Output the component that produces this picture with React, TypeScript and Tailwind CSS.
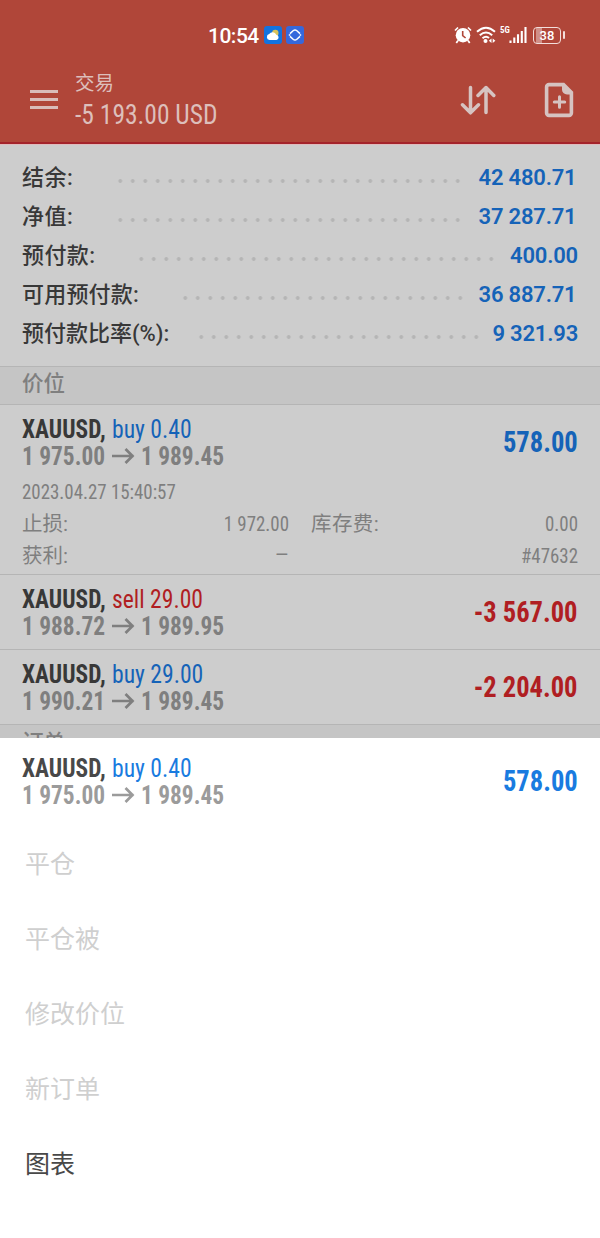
import React from "react";

const COND = "font-['Roboto_Condensed','Roboto','Noto_Sans_CJK_SC',sans-serif] [font-stretch:75%]";

function StatusBar() {
  return (
    <div className="flex h-[70px] items-center pl-[208px] text-white">
      <span className="w-[51px] whitespace-nowrap pt-px text-[21px] leading-6 font-medium tracking-[-0.5px]">10:54</span>
      <svg className="ml-[5px] h-[18px] w-[18px]" viewBox="0 0 18 18">
        <rect width="18" height="18" rx="3" fill="#1273e0" />
        <circle cx="11.3" cy="7" r="3.2" fill="#d9c45c" />
        <path d="M5.5 14a3 3 0 0 1-.3-5.9 4 4 0 0 1 7.1.6A2.7 2.7 0 0 1 12.500 14Z" fill="#fff" />
      </svg>
      <svg className="ml-[4px] h-[18px] w-[18px]" viewBox="0 0 18 18">
        <rect width="18" height="18" rx="3" fill="#3568dc" />
        <path d="M4 7.600 7.400 4.500Q9 3.300 10.600 4.500L14 7.600M4 10.400l3.400 3.100q1.600 1.200 3.200 0L14 10.400" fill="none" stroke="#fff" strokeWidth="1.500" />
        <path d="M2.800 9h1.500M13.700 9h1.500" stroke="#fff" strokeWidth="1.300" />
      </svg>
      <svg className="ml-[150px] h-[18px] w-[18px]" viewBox="0 0 18 18">
        <circle cx="9" cy="9.200" r="7.300" fill="#fff" />
        <path d="M1 4.500 4 1.500M17 4.500 14 1.500M4 14.500 2.300 17M14 14.500 15.700 17" stroke="#fff" strokeWidth="1.700" />
        <path d="M8.700 5v4.600l2.900 2.400" fill="none" stroke="#b04639" strokeWidth="1.600" />
      </svg>
      <svg className="ml-[4px] h-[18px] w-[20px]" viewBox="0 0 20 18">
        <path d="M1 5.800Q10-2.200 19 5.800M3.800 9.200Q10 3.800 16.200 9.200M6.500 12.300Q10 9.300 13 12" fill="none" stroke="#fff" strokeWidth="2" />
        <circle cx="9.500" cy="15" r="2" fill="#fff" />
        <path d="m15.500 12.500v4.500l-2.700-2.250zM16.700 12.500v4.500l2.700-2.250z" fill="#fff" />
      </svg>
      <span className={`ml-[4px] -mt-[9px] w-[9px] text-[9px] leading-[9px] font-bold ${COND}`}>5G</span>
      <svg className="h-[18px] w-[18px]" viewBox="0 0 18 18">
        <path d="M1.500 14.500v2.500M5.300 11.500V17M9 8.300V17M12.800 5V17M16.500 1V17" stroke="#fff" strokeWidth="2.100" />
      </svg>
      <span className="ml-[6px] flex h-[17px] w-[28px] items-center justify-center rounded-[4px] border-[1.5px] border-[#f3dedb] bg-[linear-gradient(90deg,transparent_2px,#d08f87_2px,#d08f87_8px,transparent_8px)] text-[13px] leading-none font-medium">38</span>
      <span className="ml-[1.5px] h-[8px] w-[2px] rounded-full bg-[#f3dedb]" />
    </div>
  );
}

function Header() {
  return (
    <header className="h-[144px] border-b-2 border-[#a4242b] bg-[#b04639]">
      <StatusBar />
      <div className="flex h-[60px] text-[#ddbfbb]">
        <div className="ml-[30px] mt-[20px] flex w-[28px] flex-col gap-[5px]">
          <span className="h-[3px] bg-[#d9bcb9]" />
          <span className="h-[3px] bg-[#d9bcb9]" />
          <span className="h-[3px] bg-[#d9bcb9]" />
        </div>
        <div className="ml-[17px] w-[200px]">
          <div className="pt-px text-[19.5px] leading-[26px]">交易</div>
          <div className={`mt-[2px] origin-left scale-x-[0.945] whitespace-nowrap text-[27px] leading-8 ${COND}`}>-5 193.00 USD</div>
        </div>
        <svg className="ml-[185px] mt-[14px] h-[32px] w-[36px]" viewBox="0 0 36 32" fill="none" stroke="#d6c3c1" strokeWidth="3.500" strokeLinecap="round" strokeLinejoin="round">
          <path d="M10.500 3.500v25M2.500 20.800l8 8 8-8M26 28.500v-25M18 11.500l8-8 7.800 8" />
        </svg>
        <svg className="ml-[48px] mt-[12px] h-[36px] w-[30px]" viewBox="0 0 30 36">
          <path d="M5 2.600H19.500L27.400 10.500V31a2.400 2.400 0 0 1-2.400 2.400H5A2.400 2.400 0 0 1 2.600 31V5A2.400 2.400 0 0 1 5 2.600Z" fill="none" stroke="#d6c3c1" strokeWidth="3.600" />
          <path d="M18 2 28 11V12.500H23a5 5 0 0 1-5-5Z" fill="#d6c3c1" />
          <path d="M15.500 14.800v10.400M10.300 20h10.400" stroke="#d6c3c1" strokeWidth="3" strokeLinecap="round" />
        </svg>
      </div>
    </header>
  );
}

const summary = [
  { label: "结余:", value: "42 480.71", lw: "w-[91.75px] tracking-[0.5px]", dw: "w-[350px]", pr: "pr-[1.5px]" },
  { label: "净值:", value: "37 287.71", lw: "w-[91.75px] tracking-[0.5px]", dw: "w-[350px]", pr: "pr-[1.5px]" },
  { label: "预付款:", value: "400.00", lw: "w-[113.25px] tracking-[0.4px]", dw: "w-[362.5px]", pr: "" },
  { label: "可用预付款:", value: "36 887.71", lw: "w-[157.25px] tracking-[0.2px]", dw: "w-[287.5px]", pr: "pr-[1.5px]" },
  { label: "预付款比率(%):", value: "9 321.93", lw: "w-[173.25px]", dw: "w-[287.5px]", pr: "" },
];

type PositionProps = { side: "buy" | "sell"; volume: string; open: string; now: string; profit: string; bright?: boolean };

function Position({ side, volume, open, now, profit, bright }: PositionProps) {
  const blue = bright ? "text-[#197be0]" : "text-[#1563b8]";
  const sideColor = side === "buy" ? blue : "text-[#b01e22]";
  const profitColor = profit.startsWith("-") ? "text-[#b01e22]" : blue;
  return (
    <div className={`flex h-[74px] items-center justify-between px-[22px] pt-px ${COND}`}>
      <div>
        <div className="flex h-[27px] whitespace-nowrap text-[25px] leading-[27px]">
          <span className={`w-[90px] origin-left scale-x-[0.935] font-bold ${bright ? "text-[#484848]" : "text-[#383838]"}`}>XAUUSD,</span>
          <span className={`origin-left scale-x-[0.945] ${sideColor}`}>{`${side} ${volume}`}</span>
        </div>
        <div className={`flex h-[27px] items-center whitespace-nowrap text-[25px] leading-[27px] font-bold ${bright ? "text-[#9b9b9b]" : "text-[#7f7f7f]"}`}>
          <span className="w-[89px] origin-left scale-x-[0.935]">{open}</span>
          <svg className="h-[18px] w-[24px]" viewBox="0 0 24 18" fill="none" stroke="currentColor" strokeWidth="2.700">
            <path d="M1 9h21.500M14.500 2l7 7-7 7" />
          </svg>
          <span className="ml-[6px] origin-left scale-x-[0.935]">{now}</span>
        </div>
      </div>
      <div className={`-mt-[1px] origin-right scale-x-[0.915] whitespace-nowrap text-[29px] leading-8 font-bold ${profitColor}`}>{profit}</div>
    </div>
  );
}

const actions = ["平仓", "平仓被", "修改价位", "新订单", "图表"];

export default function App() {
  return (
    <div className="flex h-[1238px] w-[600px] flex-col overflow-hidden bg-[#cdcdcd] font-['Roboto','Noto_Sans_CJK_SC',sans-serif]">
      <Header />
      <section className="h-[222px] border-t border-[#dfbcbf] px-[22px] pt-[13px]">
        {summary.map((r) => (
          <div key={r.label} className="flex h-[39px] items-center">
            <span className={`shrink-0 whitespace-nowrap text-[22px] leading-[30px] font-medium text-[#383838] ${r.lw}`}>{r.label}</span>
            <span className={`mt-[7px] h-[6px] shrink-0 bg-[radial-gradient(circle,#b5b5b5_1.5px,transparent_2.3px)] bg-[length:12.5px_6px] ${r.dw}`} />
            <span className={`ml-auto whitespace-nowrap text-[22px] leading-[30px] font-semibold tracking-[-0.2px] text-[#1563b8] ${r.pr}`}>{r.value}</span>
          </div>
        ))}
      </section>
      <div className="h-[39px] border-y border-[#b5b5b5] bg-[#c5c5c5] px-[22px] text-[21.5px] leading-[33px] font-medium text-[#7f7f7f]">价位</div>
      <section className="h-[169px] text-[#7f7f7f]">
        <Position side="buy" volume="0.40" open="1 975.00" now="1 989.45" profit="578.00" />
        <div className={`px-[22px] text-[20px] whitespace-nowrap ${COND}`}>
          <div className="h-[29px] origin-left scale-x-[0.945] leading-[26px]">2023.04.27 15:40:57</div>
          <div className="flex h-[32px] items-center leading-[30px]">
            <span className="text-[20.5px]">止损:</span>
            <span className="ml-auto w-[75px] origin-right scale-x-[0.945] text-right">1 972.00</span>
            <span className="ml-[22px] w-[80px] text-[20.5px] tracking-[0.4px]">库存费:</span>
            <span className="w-[187px] origin-right scale-x-[0.945] text-right">0.00</span>
          </div>
          <div className="flex h-[32px] items-center leading-[30px]">
            <span className="text-[20.5px]">获利:</span>
            <span className="mt-[-2px] ml-auto origin-right scale-x-[1.3]">–</span>
            <span className="w-[289px] origin-right scale-x-[0.945] text-right">#47632</span>
          </div>
        </div>
      </section>
      <div className="h-[75px] border-t border-[#b5b5b5]">
        <Position side="sell" volume="29.00" open="1 988.72" now="1 989.95" profit="-3 567.00" />
      </div>
      <div className="h-[75px] border-t border-[#b5b5b5]">
        <Position side="buy" volume="29.00" open="1 990.21" now="1 989.45" profit="-2 204.00" />
      </div>
      <div className="h-[14px] overflow-hidden border-t border-[#b5b5b5] bg-[#c5c5c5] px-[22px] text-[21.5px] leading-[35px] font-medium text-[#7f7f7f]">订单</div>
      <section className="flex-1 bg-white pt-[6px]">
        <Position bright side="buy" volume="0.40" open="1 975.00" now="1 989.45" profit="578.00" />
        <ul className="mt-[9px]">
          {actions.map((a) => (
            <li key={a} className={`flex h-[75px] items-center px-[25px] text-[25px] leading-[36px] ${a === "图表" ? "text-[#484848]" : "text-[#cfcfcf]"}`}>{a}</li>
          ))}
        </ul>
      </section>
    </div>
  );
}
